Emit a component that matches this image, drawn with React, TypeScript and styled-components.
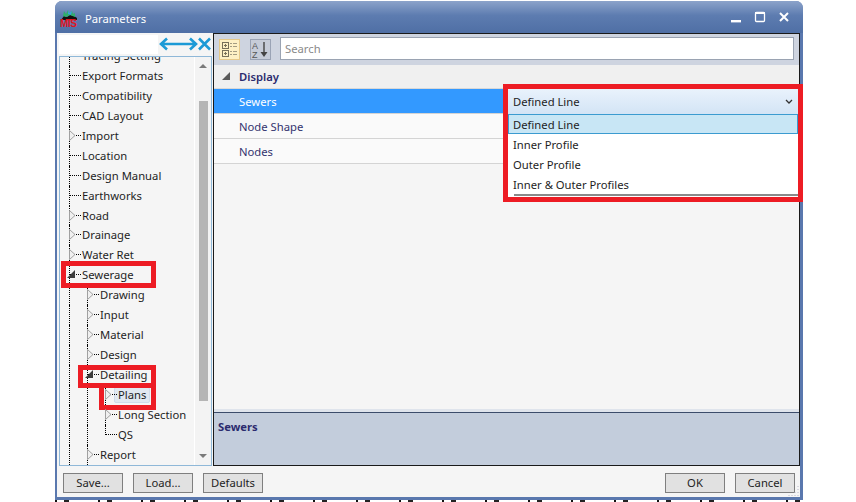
import styled, { createGlobalStyle } from "styled-components";

const GlobalStyle = createGlobalStyle`
  html, body {
    margin: 0;
    padding: 0;
    background: #ffffff;
  }
  body {
    font-family: "Noto Sans", "Liberation Sans", sans-serif;
    font-size: 11.25px;
    color: #1e1e1e;
  }
`;

const Page = styled.div`
  position: relative;
  width: 856px;
  height: 502px;
  overflow: hidden;
  padding: 1px 53px 0 55px;
  box-sizing: border-box;
`;

const Win = styled.div`
  height: 499px;
  display: flex;
  flex-direction: column;
  background: #5a78ae;
  border-radius: 7px 7px 0 0;
  padding: 0 3px 3px 2px;
  box-sizing: border-box;
`;

const Under = styled.div`
  height: 2px;
  background: repeating-linear-gradient(
    90deg,
    #111111 0 2px,
    #ffffff 2px 9px,
    #222222 9px 14px,
    #ffffff 14px 43px
  );
`;

const TitleBar = styled.div`
  height: 32px;
  margin: 0 -3px 0 -2px;
  padding: 2px 12px 0 5px;
  flex-shrink: 0;
  box-sizing: border-box;
  display: flex;
  align-items: center;
  border-radius: 7px 7px 0 0;
  background: linear-gradient(#8ca3ca, #5d7cb0 45%, #4f6fa5);
  color: #ffffff;
`;

const TitleText = styled.span`
  margin-left: 7px;
  flex: 1;
`;

const WinButtons = styled.div`
  display: flex;
  align-items: center;
  gap: 10px;
  margin-top: -3px;
`;

const Body = styled.div`
  position: relative;
  flex: 1;
  min-height: 0;
  display: flex;
  flex-direction: column;
  background: #f5f5f5;
`;

const Columns = styled.div`
  flex: 1;
  min-height: 0;
  display: flex;
`;

const LeftPane = styled.div`
  width: 156px;
  flex-shrink: 0;
  display: flex;
  flex-direction: column;
  padding: 1px 1px 0 2px;
  box-sizing: border-box;
`;

const FilterRow = styled.div`
  height: 20px;
  display: flex;
  align-items: center;
  flex-shrink: 0;
`;

const FilterInput = styled.div`
  width: 99px;
  height: 19px;
  background: #ffffff;
  flex-shrink: 0;
`;

const TreeBox = styled.div`
  flex: 1;
  min-height: 0;
  margin-top: 2px;
  display: flex;
  overflow: hidden;
  border: 1px solid #8fb8d8;
`;

const TreeList = styled.div`
  flex: 1;
  min-width: 0;
  overflow: hidden;
  padding-left: 9px;
`;

const TreeInner = styled.div`
  margin-top: -11px;
`;

const Row = styled.div`
  position: relative;
  height: 19.95px;
  display: flex;
  white-space: nowrap;
  line-height: 19px;
`;

const Indent = styled.div<{ $line?: boolean }>`
  width: 18px;
  height: 100%;
  flex-shrink: 0;
  box-sizing: border-box;
  border-left: 1px dotted ${(p) => (p.$line ? "#000000" : "transparent")};
`;

const Elbow = styled.div<{ $last?: boolean }>`
  position: relative;
  width: 13px;
  height: 100%;
  flex-shrink: 0;
  &::before {
    content: "";
    position: absolute;
    left: 0;
    top: 0;
    bottom: ${(p) => (p.$last ? "10px" : "0")};
    border-left: 1px dotted #000000;
  }
  &::after {
    content: "";
    position: absolute;
    left: 1px;
    right: 1px;
    top: 9px;
    border-top: 1px dotted #000000;
  }
`;

const Expander = styled.svg`
  position: absolute;
  z-index: 1;
  left: -2px;
  top: 3px;
  width: 9px;
  height: 12px;
`;

const Label = styled.span<{ $selected?: boolean }>`
  display: block;
  height: ${(p) => (p.$selected ? "14px" : "20px")};
  margin-left: ${(p) => (p.$selected ? "-4px" : "0")};
  padding: ${(p) => (p.$selected ? "0 3px" : "0")};
  line-height: ${(p) => (p.$selected ? "13px" : "19px")};
  ${(p) =>
    p.$selected &&
    "margin-top: 2px; background: #e1e8f0; border: 1px solid #cfdcea; border-radius: 2px;"}
`;

const Scroll = styled.div`
  width: 17px;
  flex-shrink: 0;
  background: #f3f3f3;
  border-left: 1px solid #ffffff;
  display: flex;
  flex-direction: column;
  align-items: center;
  box-sizing: border-box;
`;

const ScrollArrow = styled.div<{ $down?: boolean }>`
  height: 18px;
  flex-shrink: 0;
  display: flex;
  align-items: center;
  justify-content: center;
  &::before {
    content: "";
    border-left: 4px solid transparent;
    border-right: 4px solid transparent;
    ${(p) => (p.$down ? "border-top" : "border-bottom")}: 4px solid #7a7a7a;
  }
`;

const ScrollTrack = styled.div`
  flex: 1;
  width: 100%;
  display: flex;
  justify-content: center;
  padding-top: 26px;
  padding-bottom: 46px;
  box-sizing: border-box;
`;

const ScrollThumb = styled.div`
  width: 9px;
  background: #b5b5b5;
`;

const RightPane = styled.div`
  flex: 1;
  min-width: 0;
  display: flex;
  flex-direction: column;
  border: 1px solid #1a1a1a;
`;

const Toolbar = styled.div`
  height: 31px;
  flex-shrink: 0;
  display: flex;
  align-items: flex-start;
  background: #ced4e0;
  padding: 3px 5px 0;
  box-sizing: border-box;
`;

const ToolButton = styled.div<{ $active?: boolean }>`
  width: 21px;
  height: 21px;
  margin-top: 2px;
  margin-right: 10px;
  display: flex;
  align-items: center;
  justify-content: center;
  box-sizing: border-box;
  border: 1px solid ${(p) => (p.$active ? "#e6c98a" : "#9aa3b5")};
  background: ${(p) => (p.$active ? "#fdf0c4" : "#c6ccd8")};
  flex-shrink: 0;
`;

const SearchBox = styled.div`
  flex: 1;
  height: 23px;
  margin-left: -1px;
  background: #ffffff;
  border: 1px solid #9aa3b2;
  color: #8a8a8a;
  line-height: 21px;
  padding-left: 4px;
  box-sizing: border-box;
`;

const Grid = styled.div`
  flex: 1;
  min-height: 0;
  background: #f5f5f5;
`;

const CategoryRow = styled.div`
  height: 24px;
  display: flex;
  align-items: center;
  background: #f0f0f0;
  border-bottom: 1px solid #d8d8d8;
  box-sizing: border-box;
  color: #2b2b6e;
  font-weight: 600;
`;

const CategoryArrow = styled.svg`
  width: 9px;
  height: 9px;
  margin-left: 8px;
  margin-right: 8px;
`;

const PropRow = styled.div<{ $selected?: boolean }>`
  height: 25px;
  display: flex;
  align-items: center;
  padding-left: 25px;
  box-sizing: border-box;
  background: ${(p) => (p.$selected ? "#3399ff" : "#fafafa")};
  color: ${(p) => (p.$selected ? "#ffffff" : "#33336e")};
  border-bottom: 1px solid #d4d4d4;
`;

const Help = styled.div`
  height: 53px;
  flex-shrink: 0;
  background: #c3cddc;
  border-top: 1px solid #3b4c6b;
  box-shadow: 0 -3px 0 0 #dfe4ec;
  padding: 6px 4px;
  box-sizing: border-box;
  color: #2b2b6e;
  font-weight: 700;
`;

const Footer = styled.div`
  height: 31px;
  flex-shrink: 0;
  display: flex;
  align-items: center;
  padding: 2px 5px 0 6px;
  box-sizing: border-box;
  gap: 10px;
`;

const Spacer = styled.div`
  flex: 1;
`;

const FootButton = styled.div`
  width: 60px;
  height: 20px;
  box-sizing: border-box;
  background: #e1e1e1;
  border: 1px solid #7f7f7f;
  display: flex;
  align-items: center;
  justify-content: center;
`;

const Grip = styled.svg`
  position: absolute;
  right: 0;
  bottom: 0;
  width: 12px;
  height: 12px;
`;

const Combo = styled.div`
  position: absolute;
  left: 508px;
  top: 89px;
  width: 290px;
  height: 108px;
  background: #ffffff;
  display: flex;
  flex-direction: column;
`;

const ComboHead = styled.div`
  height: 25px;
  flex-shrink: 0;
  display: flex;
  align-items: center;
  justify-content: space-between;
  padding: 0 5px;
  background: linear-gradient(#e9f2fc, #d3e4f5);
`;

const ComboItem = styled.div<{ $current?: boolean }>`
  height: 20px;
  flex-shrink: 0;
  line-height: 20px;
  padding: 1px 0 0 5px;
  box-sizing: border-box;
  ${(p) =>
    p.$current &&
    "background: #c8e6f5; border: 1px solid #3b9bd0; padding: 0 0 0 4px; line-height: 20px;"}
`;

const ComboEdge = styled.div`
  height: 2px;
  margin-left: 6px;
  background: #8a8a8a;
  flex-shrink: 0;
`;

const RedBox = styled.div<{ $x: number; $y: number; $w: number; $h: number }>`
  position: absolute;
  left: ${(p) => p.$x}px;
  top: ${(p) => p.$y}px;
  width: ${(p) => p.$w}px;
  height: ${(p) => p.$h}px;
  border: 5px solid #ed1c24;
  box-sizing: border-box;
  pointer-events: none;
`;

type Node = {
  label: string;
  level: number;
  mark?: "open" | "closed";
  last?: boolean;
  selected?: boolean;
};

const nodes: Node[] = [
  { label: "Tracing Setting", level: 1 },
  { label: "Export Formats", level: 1 },
  { label: "Compatibility", level: 1 },
  { label: "CAD Layout", level: 1 },
  { label: "Import", level: 1, mark: "closed" },
  { label: "Location", level: 1 },
  { label: "Design Manual", level: 1 },
  { label: "Earthworks", level: 1 },
  { label: "Road", level: 1, mark: "closed" },
  { label: "Drainage", level: 1, mark: "closed" },
  { label: "Water Ret", level: 1, mark: "closed" },
  { label: "Sewerage", level: 1, mark: "open" },
  { label: "Drawing", level: 2, mark: "closed" },
  { label: "Input", level: 2, mark: "closed" },
  { label: "Material", level: 2, mark: "closed" },
  { label: "Design", level: 2, mark: "closed" },
  { label: "Detailing", level: 2, mark: "open" },
  { label: "Plans", level: 3, mark: "closed", selected: true },
  { label: "Long Section", level: 3, mark: "closed" },
  { label: "QS", level: 3, last: true },
  { label: "Report", level: 2, mark: "closed" },
  { label: "", level: 1 },
];

function TreeNode({ node }: { node: Node }) {
  return (
    <Row>
      {node.level > 1 && <Indent $line />}
      {node.level > 2 && <Indent $line />}
      <Elbow $last={node.last}>
        {node.mark === "closed" && (
          <Expander viewBox="0 0 9 12">
            <path d="M2.5 1.5 L8 6.5 L2.5 11.5 Z" fill="#f0f0f0" stroke="#a0a0a0" />
          </Expander>
        )}
        {node.mark === "open" && (
          <Expander viewBox="0 0 9 12">
            <path d="M0 10 L8 10 L8 2 Z" fill="#3c3c3c" />
          </Expander>
        )}
      </Elbow>
      {node.label && <Label $selected={node.selected}>{node.label}</Label>}
    </Row>
  );
}

export default function App() {
  return (
    <>
      <GlobalStyle />
      <Page>
        <Win>
          <TitleBar>
            <svg width="18" height="20" viewBox="0 0 18 20">
              <path d="M1 12 L4 8 L7 9 L10 7 L14 8 L17 10 L17 12 Z" fill="#111111" />
              <path d="M3 8 L4 3 L6 6 L8 2 L9 5 L12 3 L13 6 L15 5 L15 9 L10 7 L6 9 Z" fill="#2fae6a" />
              <path d="M8 2 L9 5 L12 3 L11 7 L8 6 Z" fill="#3aa0e0" />
              <text x="0" y="19" fontSize="10" fontWeight="700" fontFamily="Liberation Sans" fill="#e0141e" textLength="17">
                MTS
              </text>
            </svg>
            <TitleText>Parameters</TitleText>
            <WinButtons>
              <svg width="14" height="14" viewBox="0 0 14 14">
                <rect x="2" y="10" width="10" height="2.4" fill="#ffffff" />
              </svg>
              <svg width="14" height="14" viewBox="0 0 14 14">
                <rect x="2.5" y="2.5" width="9" height="9" rx="1" fill="none" stroke="#ffffff" strokeWidth="1.3" />
                <rect x="2" y="2" width="10" height="2" fill="#ffffff" />
              </svg>
              <svg width="14" height="14" viewBox="0 0 14 14">
                <path d="M3 3 L11 11 M11 3 L3 11" stroke="#ffffff" strokeWidth="2" />
              </svg>
            </WinButtons>
          </TitleBar>
          <Body>
            <Columns>
              <LeftPane>
                <FilterRow>
                  <FilterInput />
                  <svg width="54" height="18" viewBox="0 0 54 18">
                    <path
                      d="M3 9 H38 M9 3.5 L3 9 L9 14.5 M32 3.5 L38 9 L32 14.5"
                      fill="none"
                      stroke="#1c9ad6"
                      strokeWidth="2.6"
                    />
                    <path d="M41 3.5 L52 14.5 M52 3.5 L41 14.5" stroke="#1c9ad6" strokeWidth="2.6" />
                  </svg>
                </FilterRow>
                <TreeBox>
                  <TreeList>
                    <TreeInner>
                      {nodes.map((n, i) => (
                        <TreeNode key={i} node={n} />
                      ))}
                    </TreeInner>
                  </TreeList>
                  <Scroll>
                    <ScrollArrow />
                    <ScrollTrack>
                      <ScrollThumb />
                    </ScrollTrack>
                    <ScrollArrow $down />
                  </Scroll>
                </TreeBox>
              </LeftPane>
              <RightPane>
                <Toolbar>
                  <ToolButton $active>
                    <svg width="19" height="19" viewBox="0 0 19 19">
                      <g fill="none" stroke="#77705a">
                        <rect x="2.5" y="2.5" width="6" height="6" />
                        <rect x="2.5" y="10.5" width="6" height="6" />
                        <path d="M4 5.5 H7 M5.5 4 V7 M4 13.5 H7 M5.5 12 V15" />
                      </g>
                      <path
                        d="M10 3.5 H12 M13 3.5 H17 M10 6.5 H12 M13 6.5 H17 M10 11.5 H12 M13 11.5 H17 M10 14.5 H12 M13 14.5 H17"
                        stroke="#a39c82"
                      />
                    </svg>
                  </ToolButton>
                  <ToolButton>
                    <svg width="19" height="19" viewBox="0 0 19 19">
                      <text x="1" y="9" fontSize="9" fontFamily="Liberation Sans" fill="#555555">A</text>
                      <text x="1" y="18" fontSize="9" fontFamily="Liberation Sans" fill="#555555">Z</text>
                      <path d="M13 2 V14" stroke="#444444" strokeWidth="1.4" />
                      <path d="M9.5 12 L16.5 12 L13 17 Z" fill="#444444" />
                    </svg>
                  </ToolButton>
                  <SearchBox>Search</SearchBox>
                </Toolbar>
                <Grid>
                  <CategoryRow>
                    <CategoryArrow viewBox="0 0 9 9">
                      <path d="M0 8 L8 8 L8 0 Z" fill="#5a5a5a" />
                    </CategoryArrow>
                    Display
                  </CategoryRow>
                  <PropRow $selected>Sewers</PropRow>
                  <PropRow>Node Shape</PropRow>
                  <PropRow>Nodes</PropRow>
                </Grid>
                <Help>Sewers</Help>
              </RightPane>
            </Columns>
            <Footer>
              <FootButton>Save...</FootButton>
              <FootButton>Load...</FootButton>
              <FootButton>Defaults</FootButton>
              <Spacer />
              <FootButton>OK</FootButton>
              <FootButton>Cancel</FootButton>
            </Footer>
            <Grip viewBox="0 0 12 12">
              <path d="M10 1 V2 M10 4 V5 M10 7 V8 M10 10 V11 M7 7 V8 M7 10 V11 M4 10 V11 M1 10 V11" stroke="#b8b8c8" />
            </Grip>
          </Body>
        </Win>
        <Under />
        <Combo>
          <ComboHead>
            Defined Line
            <svg width="8" height="6" viewBox="0 0 8 6">
              <path d="M1 1 L4 4 L7 1" fill="none" stroke="#333333" strokeWidth="1.3" />
            </svg>
          </ComboHead>
          <ComboItem $current>Defined Line</ComboItem>
          <ComboItem>Inner Profile</ComboItem>
          <ComboItem>Outer Profile</ComboItem>
          <ComboItem>Inner &amp; Outer Profiles</ComboItem>
          <ComboEdge />
        </Combo>
        <RedBox $x={503} $y={84} $w={300} $h={118} />
        <RedBox $x={61} $y={261} $w={95} $h={27} />
        <RedBox $x={78} $y={365} $w={78} $h={23} />
        <RedBox $x={99} $y={383} $w={57} $h={27} />
      </Page>
    </>
  );
}
